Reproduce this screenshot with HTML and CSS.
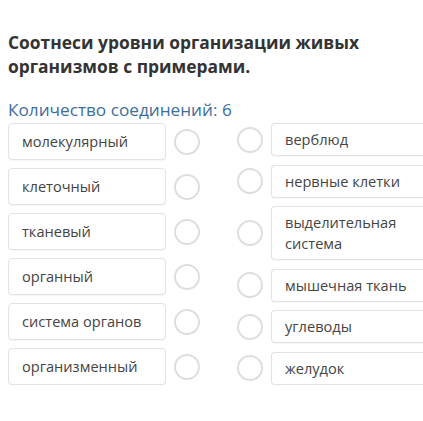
FILE: index.html
```html
<!DOCTYPE html>
<html lang="ru">
<head>
<meta charset="utf-8">
<link rel="stylesheet" href="styles.css">
</head>
<body>
<div class="page">
  <h1 class="title">Соотнеси уровни организации живых организмов с примерами.</h1>
  <div class="count">Количество соединений: 6</div>
  <div class="board">
    <div class="col col-left">
      <div class="item"><div class="box">молекулярный</div><span class="dot"></span></div>
      <div class="item"><div class="box">клеточный</div><span class="dot"></span></div>
      <div class="item"><div class="box">тканевый</div><span class="dot"></span></div>
      <div class="item"><div class="box">органный</div><span class="dot"></span></div>
      <div class="item"><div class="box">система органов</div><span class="dot"></span></div>
      <div class="item"><div class="box">организменный</div><span class="dot"></span></div>
    </div>
    <div class="col col-right">
      <div class="item"><span class="dot"></span><div class="box">верблюд</div></div>
      <div class="item"><span class="dot"></span><div class="box">нервные клетки</div></div>
      <div class="item"><span class="dot"></span><div class="box">выделительная система</div></div>
      <div class="item"><span class="dot"></span><div class="box">мышечная ткань</div></div>
      <div class="item"><span class="dot"></span><div class="box">углеводы</div></div>
      <div class="item"><span class="dot"></span><div class="box">желудок</div></div>
    </div>
  </div>
</div>
</body>
</html>
```

FILE: styles.css
```css
html, body {
  margin: 0;
  padding: 0;
  background: #ffffff;
}
body {
  font-family: "Open Sans", "Noto Sans", sans-serif;
  color: #3a3a3a;
}
.page {
  padding: 30px 0 0 8px;
}
.title {
  margin: 0;
  font-size: 17.4px;
  line-height: 24px;
  font-weight: 700;
  color: #333333;
  width: 380px;
}
.count {
  margin-top: 20px;
  font-size: 17.2px;
  line-height: 23px;
  color: #3c6e9e;
}
.board {
  margin-top: 2px;
  display: flex;
  gap: 37px;
  height: 262px;
}
.col {
  display: flex;
  flex-direction: column;
  justify-content: space-between;
}
.item {
  display: flex;
  align-items: center;
  gap: 8px;
}
.box {
  box-sizing: border-box;
  width: 158px;
  border: 1px solid #e2e2e2;
  border-radius: 4px;
  background: #fff;
  font-size: 14.6px;
  line-height: 21px;
  color: #444444;
  padding: 5px 13px;
  box-shadow: 0 1px 1px rgba(0,0,0,0.04);
}
.col-left .box {
  height: 37px;
  display: flex;
  align-items: center;
}
.col-right .box {
  width: 152px;
  min-height: 32px;
  border-right: none;
  border-radius: 4px 0 0 4px;
}
.dot {
  box-sizing: border-box;
  width: 26px;
  height: 26px;
  border: 2px solid #dedede;
  border-radius: 50%;
  flex: none;
}
```
